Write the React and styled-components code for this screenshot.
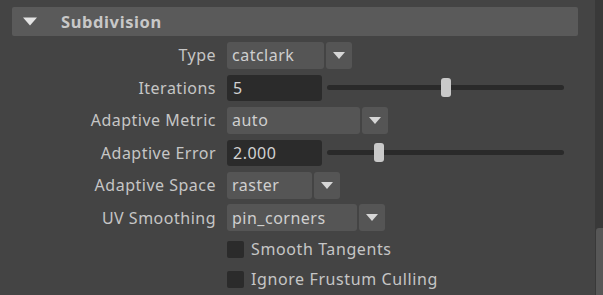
import React from 'react';
import styled, { createGlobalStyle } from 'styled-components';

const GlobalStyle = createGlobalStyle`
    html, body {
        margin: 0;
        padding: 0;
        background: #444444;
    }
    body {
        font-family: "Noto Sans", "Open Sans", sans-serif;
        color: #c6c6c6;
    }
`;

const Page = styled.div`
    display: flex;
    width: 603px;
    height: 295px;
    overflow: hidden;
`;

const Content = styled.div`
    flex: 1;
    padding: 7px 17px 0 12px;
`;

const ScrollTrack = styled.div`
    width: 8px;
    background: #393939;
    display: flex;
    flex-direction: column;
    padding-top: 228px;
    box-sizing: border-box;
`;

const ScrollThumb = styled.div`
    flex: 1;
    margin-left: 1px;
    background: #575757;
    border-radius: 3px 0 0 0;
`;

const Header = styled.div`
    height: 29px;
    background: #5a5a5a;
    border-radius: 2px;
    display: flex;
    align-items: center;
    padding-left: 11px;
`;

const Title = styled.span`
    margin-left: 24px;
    font-size: 16.5px;
    font-weight: bold;
    color: #c8c8c8;
    letter-spacing: 0.6px;
`;

const Form = styled.div`
    margin-top: ${(p) => p.$top || 0}px;
    display: grid;
    grid-template-columns: 204px 1fr;
    column-gap: 11px;
    grid-auto-rows: ${(p) => p.$row}px;
`;

const Label = styled.div`
    display: flex;
    align-items: center;
    justify-content: flex-end;
    font-size: 16px;
    letter-spacing: 0.5px;
    white-space: nowrap;
`;

const Control = styled.div`
    display: flex;
    align-items: center;
    gap: ${(p) => p.$gap || 2}px;
    grid-column: 2;
`;

const Field = styled.div`
    width: ${(p) => p.$w}px;
    height: 27px;
    box-sizing: border-box;
    background: #555555;
    border-radius: 3px;
    padding-left: 5px;
    display: flex;
    align-items: center;
    font-size: 16px;
    letter-spacing: 0.5px;
    color: #cfcfcf;
`;

const ArrowBox = styled.div`
    width: 26px;
    height: 27px;
    background: #555555;
    border-radius: 3px;
    display: flex;
    align-items: center;
    justify-content: center;
`;

const NumberInput = styled.div`
    width: 95px;
    height: 26px;
    box-sizing: border-box;
    background: #2b2b2b;
    border-radius: 3px;
    padding-left: 6px;
    display: flex;
    align-items: center;
    font-size: 16px;
    letter-spacing: 0.5px;
    color: #d2d2d2;
`;

const Slider = styled.div`
    position: relative;
    width: 237px;
    height: 5px;
    background: #2a2a2a;
    border-radius: 3px;
`;

const Handle = styled.div`
    position: absolute;
    top: -7px;
    width: 10px;
    height: 19px;
    margin-left: -5px;
    background: #c9c9c9;
    border-radius: 3px;
`;

const Box = styled.div`
    width: 17px;
    height: 17px;
    background: #2b2b2b;
    border-radius: 2px;
`;

const CheckText = styled.span`
    font-size: 16px;
    letter-spacing: 0.6px;
    color: #c6c6c6;
`;

const Arrow = ({ w = 12, h = 7, color = '#d6d6d6' }) => (
    <svg width={w} height={h} viewBox="0 0 12 7">
        <polygon points="0,0 12,0 6,7" fill={color} />
    </svg>
);

const Dropdown = ({ value, width }) => (
    <Control>
        <Field $w={width}>{value}</Field>
        <ArrowBox>
            <Arrow />
        </ArrowBox>
    </Control>
);

const SliderRow = ({ value, pos }) => (
    <Control $gap={5}>
        <NumberInput>{value}</NumberInput>
        <Slider>
            <Handle style={{ left: `${pos * 100}%` }} />
        </Slider>
    </Control>
);

const Check = ({ label }) => (
    <Control $gap={7}>
        <Box />
        <CheckText>{label}</CheckText>
    </Control>
);

const App = () => {
    return (
        <>
            <GlobalStyle />
            <Page>
                <Content>
                    <Header>
                        <Arrow w={14} h={9} color="#e4e4e4" />
                        <Title>Subdivision</Title>
                    </Header>
                    <Form $top={3} $row={32.5}>
                        <Label>Type</Label>
                        <Dropdown value="catclark" width={97} />
                        <Label>Iterations</Label>
                        <SliderRow value="5" pos={0.502} />
                        <Label>Adaptive Metric</Label>
                        <Dropdown value="auto" width={133} />
                        <Label>Adaptive Error</Label>
                        <SliderRow value="2.000" pos={0.218} />
                        <Label>Adaptive Space</Label>
                        <Dropdown value="raster" width={85} />
                        <Label>UV Smoothing</Label>
                        <Dropdown value="pin_corners" width={130} />
                    </Form>
                    <Form $row={30}>
                        <Check label="Smooth Tangents" />
                        <Check label="Ignore Frustum Culling" />
                    </Form>
                </Content>
                <ScrollTrack>
                    <ScrollThumb />
                </ScrollTrack>
            </Page>
        </>
    );
};

export default App;
